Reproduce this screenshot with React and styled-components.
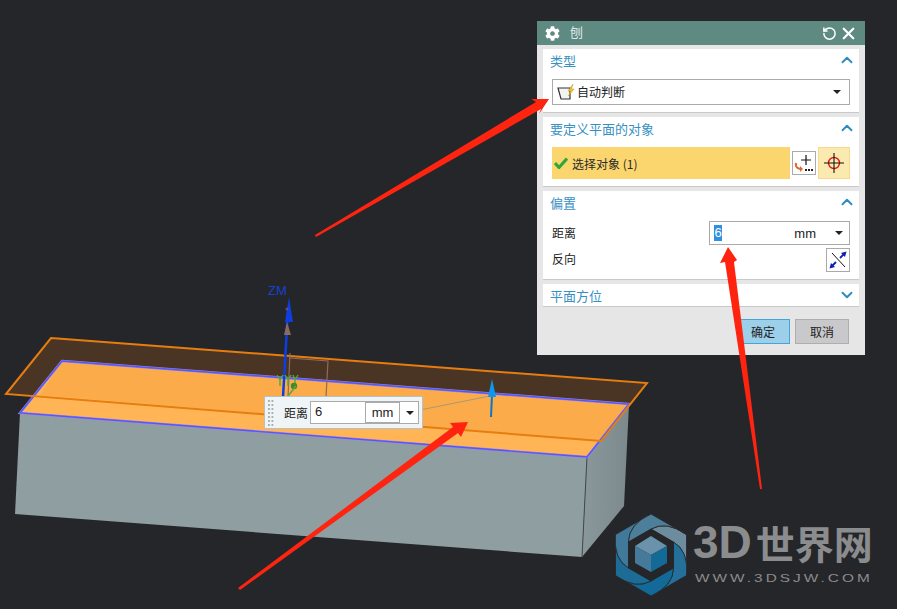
import React from 'react';
import styled, { createGlobalStyle } from 'styled-components';
import { ChevronUp, ChevronDown, RotateCcw, X } from 'lucide-react';
import { FaCog } from 'react-icons/fa';

const CJK = '"Noto Sans CJK SC", "Liberation Sans", sans-serif';
const Global = createGlobalStyle`
  html, body { margin: 0; padding: 0; background: #25262a; }
  body { font-family: ${CJK}; overflow: hidden; }
`;
const Page = styled.div`position: relative; width: 897px; height: 609px; overflow: hidden; background: #25262a;`;
const Canvas = styled.svg`position: absolute; inset: 0; display: block;`;
const ArrowLayer = styled.svg`position: absolute; inset: 0; display: block; z-index: 5; pointer-events: none;`;

const Dialog = styled.section`
  position: absolute; left: 537px; top: 21px; width: 328px; height: 334px; box-sizing: border-box;
  background: #e6e6e6; display: flex; flex-direction: column; z-index: 3;
`;
const TitleBar = styled.header`
  height: 24px; flex: none; background: #5f8a82; color: #fff; display: flex; align-items: center;
  padding: 0 8px; gap: 10px;
`;
const TitleText = styled.span`flex: 1; color: #dfe9e6; font-size: 13px; line-height: 22px; height: 24px;`;
const TitleActions = styled.div`display: flex; align-items: center; gap: 2px; margin-right: -1px;`;
const Body = styled.div`display: flex; flex-direction: column; gap: 4px; padding: 4px 6px 0;`;
const Card = styled.div`
  background: #fff; border-bottom: 1px solid #c9c9c9; box-sizing: border-box; height: ${p => p.$h}px;
  padding: 0 9px 0 7px; display: flex; flex-direction: column; overflow: hidden;
`;
const CardHead = styled.div`
  height: ${p => p.$h}px; flex: none; display: flex; align-items: center; justify-content: space-between;
  margin-right: -9px; padding-right: 3px; color: #3890c2; font-size: 13px;
`;
const CardContent = styled.div`padding-left: 2px; margin-top: 8px; display: flex; flex-direction: column;`;
const Combo = styled.div`
  height: 26px; box-sizing: border-box; border: 1px solid #aaa; display: flex; align-items: center; background: #fff;
  padding: 0 8px 0 3px; font-size: 12px; color: #222; justify-content: space-between;
`;
const ComboLabel = styled.span`display: flex; align-items: center; gap: 1px; line-height: 22px; height: 24px;`;
const Caret = styled.i`
  width: 0; height: 0; border-left: 4px solid transparent; border-right: 4px solid transparent;
  border-top: 4px solid #222; display: block; flex: none;
`;
const SelectRow = styled.div`display: flex; align-items: center; height: 32px; gap: 2px;`;
const SelectBar = styled.div`
  width: 238px; height: 32px; background: #fbd56d; display: flex; align-items: center; gap: 4px; padding-left: 2px;
  box-sizing: border-box; font-size: 12px; color: #2a2a2a;
`;
const IconButton = styled.div`
  width: ${p => p.$s}px; height: ${p => p.$s}px; box-sizing: border-box; flex: none; display: flex; align-items: center; justify-content: center;
  border: 1px solid ${p => (p.$active ? '#f6d98c' : '#aaa')}; background: ${p => (p.$active ? '#fbeab0' : '#fff')};
`;
const FieldRow = styled.div`display: flex; align-items: center; justify-content: space-between; height: ${p => p.$h}px; font-size: 12px; color: #222; margin-bottom: ${p => p.$mb || 0}px;`;
const FieldLabel = styled.span`line-height: ${p => p.$lh}px; height: 24px;`;
const NumberField = styled.div`
  width: 141px; height: 24px; box-sizing: border-box; border: 1px solid #aaa; display: flex; align-items: center; padding: 0 6px 0 4px;
  font-family: "Liberation Sans", sans-serif; font-size: 12px; color: #222;
`;
const Selected = styled.span`background: #2f8fe0; color: #fff; width: 8px; height: 16px; line-height: 16px; font-size: 13px; text-align: center;`;
const Unit = styled.span`margin-left: auto; margin-right: 19px; font-size: 13px;`;
const Footer = styled.footer`display: flex; justify-content: flex-end; gap: 5px; padding: 12px 16px 0 0;`;
const Btn = styled.div`
  height: 25px; width: ${p => p.$w}px; box-sizing: border-box; display: flex; align-items: center; justify-content: center; font-size: 12px; color: #222;
  padding-right: ${p => (p.$primary ? 4 : 0)}px;
  background: ${p => (p.$primary ? '#9ccfea' : '#c9c9cc')}; border: 1px solid ${p => (p.$primary ? '#4aa3d8' : '#aeaeae')};
`;

const MiniPanel = styled.div`
  position: absolute; left: 264px; top: 396px; width: 159px; height: 33px; box-sizing: border-box; z-index: 2;
  background: #eff5f6; border: 1px solid #b9c0c3; display: flex; align-items: center; padding: 0 3px 0 3px;
  font-size: 12px; color: #222;
`;
const Grip = styled.div`
  width: 6px; height: 26px; margin-right: 10px; flex: none;
  background-image: radial-gradient(circle at 1px 1px, #a9adb0 1.2px, transparent 1.3px);
  background-size: 3.5px 4px;
`;
const MiniLabel = styled.span`margin-right: 2px; white-space: nowrap;`;
const MiniInput = styled.div`
  flex: 1; height: 23px; box-sizing: border-box; background: #fff; border: 1px solid #aaa; display: flex; align-items: center;
  font-family: "Liberation Sans", sans-serif; font-size: 13px; padding-left: 4px;
`;
const MiniValue = styled.span`width: 50px; margin-top: -2px;`;
const MiniUnit = styled.span`
  width: 35px; height: 21px; box-sizing: border-box; border: 1px solid #aaa; font-size: 13px; display: flex; align-items: center; justify-content: center; margin-right: 6px;
`;
const AxisLabel = styled.span`
  position: absolute; left: 268px; top: 284px; color: #1741d0; font: 13px/14px "Liberation Sans", sans-serif;
`;

const Logo = styled.div`position: absolute; left: 614px; top: 514px; display: flex; gap: 5px; z-index: 1;`;
const Wordmark = styled.div`display: flex; flex-direction: column; color: #8b8c8e; padding-top: 6px;`;
const Title3D = styled.div`
  height: 44px; display: flex; align-items: center; font: bold 46px/44px "Liberation Sans", sans-serif; white-space: nowrap; width: 180px;
`;
const TitleCn = styled.span`font: bold 39px/44px ${CJK}; margin-left: 4px; letter-spacing: 0;`;
const Url = styled.div`
  font: 11px/12px "Liberation Sans", sans-serif; letter-spacing: 2.15px; transform: scaleX(1.4); transform-origin: left center; white-space: nowrap; margin-top: 8px; margin-left: 2px;
`;

const hex = (r, i, cx = 37, cy = 41) => {
  const a = (-90 + 60 * i) * Math.PI / 180;
  return [cx + r * Math.cos(a), cy + r * Math.sin(a)];
};
const bladeColors = ['#6d8c9e', '#24709a', '#136a98', '#1d6c96', '#40799a', '#4d7e9a'];
const Blades = () => bladeColors.map((c, i) => {
  const a = hex(26, i), b = hex(26, i + 1);
  const o1 = hex(41, i + 1), o2 = hex(41, i + 2);
  const c1 = hex(38, i + 0.4), c2 = hex(38, i + 1.4);
  const d = `M${a} Q${c1} ${o1} L${o2} Q${c2} ${b} Z`;
  return <path key={i} d={d} fill={c} stroke="#25262a" strokeWidth="0.8" />;
});

const LogoMark = () => (
  <svg width="74" height="84" viewBox="0 0 74 84">
    <Blades />
    <polygon points={[0, 1, 2, 3, 4, 5].map(i => hex(26, i)).join(' ')} fill="#25262a" />
    <polygon points="37,22 53,32 37,41 21,32" fill="#6a93ab" />
    <polygon points="21,32 37,41 37,58 21,49" fill="#467a9b" />
    <polygon points="53,32 37,41 37,58 53,49" fill="#146a97" />
  </svg>
);

const Section = ({ title, h, children, open = true }) => (
  <Card $h={h}>
    <CardHead $h={22}>
      {title}
      {open ? <ChevronUp size={18} strokeWidth={2.5} color="#2e8bc0" /> : <ChevronDown size={18} strokeWidth={2.5} color="#2e8bc0" />}
    </CardHead>
    {open && <CardContent>{children}</CardContent>}
  </Card>
);

export default function App() {
  return (
    <Page>
      <Global />
      <Canvas width="897" height="609" viewBox="0 0 897 609">
        <defs>
          <linearGradient id="side" x1="0" y1="0" x2="1" y2="0">
            <stop offset="0" stopColor="#8a989b" />
            <stop offset="1" stopColor="#7d8a8d" />
          </linearGradient>
        </defs>
        <polygon points="20,413 587,457 582,557 15,514" fill="#8e9ea1" />
        <polygon points="629,404 587,457 582,557 624,506" fill="url(#side)" />
        <line x1="587" y1="457" x2="582" y2="557" stroke="#44494c" strokeWidth="1" />
        <polygon points="51,338 647,383 601,441 6,394" fill="#4a3524" />
        <polygon points="62,361 629,404 587,457 20,413" fill="#ffb555" />
        <polygon points="62,361 629,404 601,441 40,395" fill="#fbab4a" />
        <polygon points="62,361 629,404 587,457 20,413" fill="none" stroke="#b080d0" strokeWidth="2.4" />
        <polygon points="62,361 629,404 587,457 20,413" fill="none" stroke="#4a5cff" strokeWidth="1.4" />
        <polygon points="51,338 647,383 601,441 6,394" fill="none" stroke="#e67d10" strokeWidth="2" />
        {/* gizmo */}
        <polyline points="290,353 288,397" stroke="#8f6a5f" strokeWidth="1.2" fill="none" />
        <polyline points="290,358 328,361 326,397" stroke="#8f6a5f" strokeWidth="1.2" fill="none" />
        <line x1="283" y1="397" x2="288" y2="310" stroke="#0d3fe0" strokeWidth="2.5" />
        <polygon points="289,297 293,322 285,322" fill="#0d3fe0" />
        <polygon points="287,322 291,335 284,335" fill="#8a6a66" />
        <circle cx="287" cy="309" r="1.5" fill="#6a4a7a" />
        <path d="M277,375 l3,5 l3,-5 M280,380 v6 M285,375 l3,5 l3,-5 M288,380 v6 M293,375 l2,5 l3,-5 M295,380 v6" stroke="#4fa83a" strokeWidth="1.4" fill="none" />
        <circle cx="294" cy="386" r="3.2" fill="#3f8a2e" />
        <line x1="288" y1="396" x2="296" y2="386" stroke="#5da63e" strokeWidth="1.5" />
        {/* direction handle */}
        <line x1="420" y1="410" x2="490" y2="396" stroke="#a89b72" strokeWidth="1" />
        <line x1="491" y1="417" x2="492" y2="395" stroke="#0a78c8" strokeWidth="2" />
        <polygon points="492,379 496,397 488,397" fill="#0d97f0" />
      </Canvas>

      <AxisLabel>ZM</AxisLabel>

      <MiniPanel>
        <Grip />
        <MiniLabel>距离</MiniLabel>
        <MiniInput>
          <MiniValue>6</MiniValue>
          <MiniUnit>mm</MiniUnit>
          <Caret />
        </MiniInput>
      </MiniPanel>

      <Dialog>
        <TitleBar>
          <FaCog size={15} />
          <TitleText>刨</TitleText>
          <TitleActions>
            <RotateCcw size={15} strokeWidth={2.4} />
            <X size={19} strokeWidth={2.8} />
          </TitleActions>
        </TitleBar>
        <Body>
          <Section title="类型" h={64}>
            <Combo>
              <ComboLabel>
                <svg width="20" height="17" viewBox="0 0 20 17">
                  <polygon points="2,4 14,4 14,15 5,15" fill="#f3f3f3" stroke="#333" strokeWidth="1.2" />
                  <polygon points="17,0 12,7 14.5,7 12.5,12 18,5 15.5,5" fill="#f2c230" stroke="#a88514" strokeWidth=".4" />
                </svg>
                自动判断
              </ComboLabel>
              <Caret />
            </Combo>
          </Section>
          <Section title="要定义平面的对象" h={70}>
            <SelectRow>
              <SelectBar>
                <svg width="14" height="12" viewBox="0 0 14 12">
                  <path d="M1,6 L5,10.5 L13,1.5" fill="none" stroke="#2ca838" strokeWidth="3" />
                </svg>
                选择对象 (1)
              </SelectBar>
              <IconButton $s={24}>
                <svg width="22" height="22" viewBox="0 0 22 22">
                  <path d="M13,3 v10 M8,8 h10" stroke="#111" strokeWidth="1.2" />
                  <path d="M3,11 c-1,5 3,6 6,6" fill="none" stroke="#e0682a" strokeWidth="2" />
                  <path d="M7,14 l3,3 l-3,3 z" fill="#e0682a" />
                  <path d="M12,18 h2 M15,18 h2 M18,18 h2" stroke="#222" strokeWidth="2" />
                </svg>
              </IconButton>
              <IconButton $s={32} $active>
                <svg width="26" height="26" viewBox="0 0 26 26">
                  <circle cx="13" cy="13" r="5.5" fill="none" stroke="#e01818" strokeWidth="1.4" />
                  <path d="M13,3 v20 M3,13 h20" stroke="#111" strokeWidth="1.1" />
                </svg>
              </IconButton>
            </SelectRow>
          </Section>
          <Section title="偏置" h={89}>
            <FieldRow $h={24} $mb={3}>
              <FieldLabel $lh={24}>距离</FieldLabel>
              <NumberField>
                <Selected>6</Selected>
                <Unit>mm</Unit>
                <Caret />
              </NumberField>
            </FieldRow>
            <FieldRow $h={24}>
              <FieldLabel $lh={22}>反向</FieldLabel>
              <IconButton $s={24}>
                <svg width="20" height="20" viewBox="0 0 20 20">
                  <path d="M4,3 L17,17" stroke="#111" strokeWidth="1" />
                  <path d="M8,12 L3,17 M12,8 L17,3" stroke="#1020b0" strokeWidth="1.8" />
                  <path d="M1.5,18.5 L3,13 L7,17 Z M18.5,1.5 L13,3 L17,7 Z" fill="#1020b0" />
                </svg>
              </IconButton>
            </FieldRow>
          </Section>
          <Section title="平面方位" h={23} open={false} />
        </Body>
        <Footer>
          <Btn $w={50} $primary>确定</Btn>
          <Btn $w={54}>取消</Btn>
        </Footer>
      </Dialog>

      <Logo>
        <LogoMark />
        <Wordmark>
          <Title3D>3D<TitleCn>世界网</TitleCn></Title3D>
          <Url>WWW.3DSJW.COM</Url>
        </Wordmark>
      </Logo>

      <ArrowLayer width="897" height="609" viewBox="0 0 897 609">
        <polygon points="315,235 316,237 541,109 539,114 549,99 531,99 536,102" fill="#ff2410" />
        <polygon points="238,588 240,590 458,433 461,437 468,422 450,423 453,427" fill="#ff2410" />
        <polygon points="760,489 762,489 734,262 737,260 728,247 720,263 725,262" fill="#ff2410" />
      </ArrowLayer>
    </Page>
  );
}
